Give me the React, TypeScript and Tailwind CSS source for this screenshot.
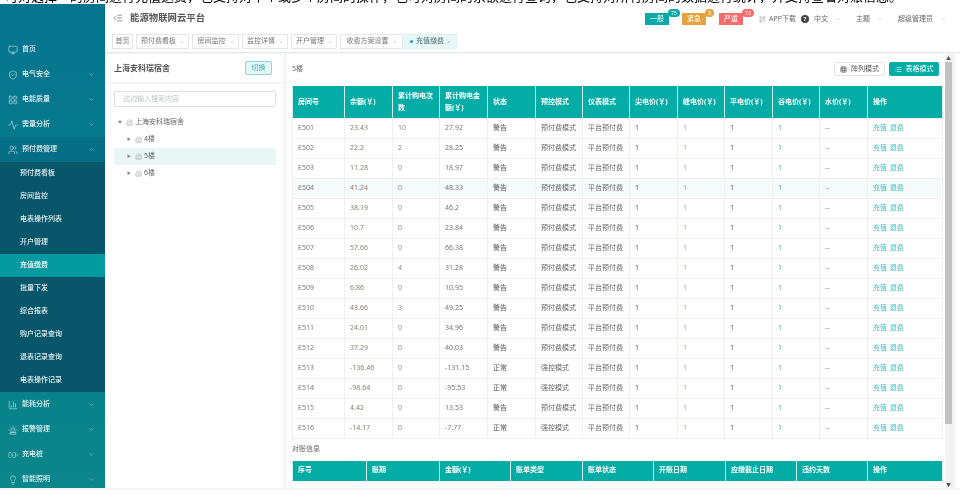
import {
  Activity,
  BarChart3,
  BatteryCharging,
  Building2,
  ChevronDown,
  ChevronUp,
  Grid3x3,
  IndentDecrease,
  LayoutGrid,
  Lightbulb,
  List,
  Monitor,
  QrCode,
  ShieldCheck,
  Siren,
  Users,
  X,
} from "lucide-react";

const topMenu = [
  { icon: Monitor, label: "首页", arrow: false },
  { icon: ShieldCheck, label: "电气安全", arrow: true },
  { icon: LayoutGrid, label: "电能质量", arrow: true },
  { icon: Activity, label: "需量分析", arrow: true },
];

const subMenu = ["预付费看板", "房间监控", "电表操作列表", "开户管理", "充值缴费", "批量下发", "综合报表", "购户记录查询", "退表记录查询", "电表操作记录"];

const bottomMenu = [
  { icon: BarChart3, label: "能耗分析" },
  { icon: Siren, label: "报警管理" },
  { icon: BatteryCharging, label: "充电桩" },
  { icon: Lightbulb, label: "智能照明" },
];

const tabs = [
  { label: "首页", w: "w-[21px]", close: false },
  { label: "预付费看板", w: "w-[53px]", close: true },
  { label: "房间监控", w: "w-[47px]", close: true },
  { label: "监控详情", w: "w-[46px]", close: true },
  { label: "开户管理", w: "w-[46px]", close: true },
  { label: "收费方案设置", w: "w-[63px]", close: true },
];

const roomHeads = ["房间号", "余额(￥)", "累计购电次数", "累计购电金额(￥)", "状态", "预控模式", "仪表模式", "尖电价(￥)", "峰电价(￥)", "平电价(￥)", "谷电价(￥)", "水价(￥)", "操作"];
const roomWidths = [52, 48, 47, 48, 48, 47, 47, 48, 47, 48, 47, 48, 75];

const rooms = [
  ["E501", "23.43", "10", "27.92", "warn"],
  ["E502", "22.2", "2", "28.25", "warn"],
  ["E503", "11.28", "0", "18.97", "warn"],
  ["E504", "41.24", "0", "48.33", "warn"],
  ["E505", "38.19", "0", "46.2", "warn"],
  ["E506", "10.7", "0", "23.84", "warn"],
  ["E507", "57.66", "0", "66.38", "warn"],
  ["E508", "26.02", "4", "31.28", "warn"],
  ["E509", "6.86", "0", "10.95", "warn"],
  ["E510", "43.66", "3", "49.25", "warn"],
  ["E511", "24.01", "0", "34.96", "warn"],
  ["E512", "37.29", "0", "40.03", "warn"],
  ["E513", "-136.46", "0", "-131.15", "ok"],
  ["E514", "-98.64", "0", "-95.53", "ok"],
  ["E515", "4.42", "0", "13.53", "warn"],
  ["E516", "-14.17", "0", "-7.77", "ok"],
];

const billHeads = ["序号", "账期", "金额(￥)", "账单类型", "账单状态", "开账日期", "应缴截止日期", "违约天数", "操作"];
const billWidths = [74, 73, 71, 72, 71, 72, 71, 71, 75];

const Sidebar = () => (
  <aside className="w-[105px] shrink-0 overflow-hidden bg-gradient-to-b from-[#04748f] to-[#0b868a] pt-[33px] text-[7px] font-medium text-[#e4f1f4]">
    {topMenu.map((m) => (
      <div key={m.label} className="flex h-[25px] items-center pl-[8px] pr-[10px]">
        <m.icon size={10} strokeWidth={1.5} className="text-[#c6e0e6]" />
        <span className="ml-[4px] flex-1">{m.label}</span>
        {m.arrow && <ChevronDown size={7} className="text-[#8fc3cf]" />}
      </div>
    ))}
    <div className="flex h-[25px] items-center bg-[#066f87] pl-[8px] pr-[10px]">
      <Users size={10} strokeWidth={1.5} className="text-[#c6e0e6]" />
      <span className="ml-[4px] flex-1">预付费管理</span>
      <ChevronUp size={7} className="text-[#8fc3cf]" />
    </div>
    <div className="bg-[#07566a]">
      {subMenu.map((s) => (
        <div key={s} className={s === "充值缴费" ? "flex h-[23px] items-center bg-[#059a9f] pl-[20px] text-white" : "flex h-[23px] items-center pl-[20px]"}>
          {s}
        </div>
      ))}
    </div>
    {bottomMenu.map((m) => (
      <div key={m.label} className="flex h-[25px] items-center pl-[8px] pr-[10px]">
        <m.icon size={10} strokeWidth={1.5} className="text-[#c6e0e6]" />
        <span className="ml-[4px] flex-1">{m.label}</span>
        <ChevronDown size={7} className="text-[#8fc3cf]" />
      </div>
    ))}
  </aside>
);

const Alarm = ({ label, count, bg, pill }: { label: string; count: string; bg: string; pill: string }) => (
  <div className={`relative flex h-[12px] w-[24px] items-center justify-center text-[7px] text-white ${bg}`}>
    {label}
    <span className={`absolute -top-[4px] left-[23px] flex h-[8px] min-w-[9px] items-center justify-center rounded-full px-[3px] text-[5px] leading-none ${pill}`}>{count}</span>
  </div>
);

const Header = () => (
  <header className="flex h-[28px] shrink-0 items-center pl-[8px] pr-[14px] text-[7px] text-[#666]">
    <IndentDecrease size={10} strokeWidth={1.5} className="text-[#555]" />
    <h1 className="ml-[7px] text-[9.4px] font-bold text-[#555]">能源物联网云平台</h1>
    <div className="ml-auto mt-[2px] flex items-center">
      <Alarm label="一般" count="75" bg="bg-[#0aa8a8]" pill="bg-[#0aa8a8]" />
      <div className="w-[13px]" />
      <Alarm label="紧急" count="3" bg="bg-[#e6a23c]" pill="bg-[#e6a23c]" />
      <div className="w-[13px]" />
      <Alarm label="严重" count="73" bg="bg-[#f56c6c]" pill="bg-[#f56c6c]" />
      <QrCode size={7} strokeWidth={1.5} className="ml-[16px] text-[#999]" />
      <span className="ml-[3px]">APP下载</span>
      <span className="ml-[5px] flex h-[8px] w-[8px] items-center justify-center rounded-full bg-[#444] text-[6px] font-bold text-white">?</span>
      <span className="ml-[5px]">中文</span>
      <ChevronDown size={6} className="ml-[7px] text-[#bbb]" />
      <span className="ml-[15px]">主题</span>
      <ChevronDown size={6} className="ml-[7px] text-[#bbb]" />
      <span className="ml-[15px]">超级管理员</span>
      <ChevronDown size={6} className="ml-[7px] text-[#bbb]" />
    </div>
  </header>
);

const Tabs = () => (
  <div className="flex h-[21px] shrink-0 gap-[3px] border-b border-[#e6e9ef] pl-[7px] pt-[2px] text-[7px] text-[#777] shadow-[0_1px_2px_rgba(0,0,0,0.04)]">
    {tabs.map((t) => (
      <div key={t.label} className={`flex h-[15px] shrink-0 items-center justify-center gap-[4px] border border-[#e3e5ea] ${t.w}`}>
        {t.label}
        {t.close && <X size={4} className="text-[#aaa]" />}
      </div>
    ))}
    <div className="-ml-[2px] flex h-[15px] w-[53px] shrink-0 items-center justify-center gap-[3px] border border-[#daf2f2] bg-[#e8f7f7] text-[#4c6b6b]">
      <span className="h-[3px] w-[3px] rounded-full bg-[#0aa8a8]" />
      充值缴费
      <X size={4} className="text-[#888]" />
    </div>
  </div>
);

const TreeRow = ({ label, active }: { label: string; active?: boolean }) => (
  <div className={active ? "flex h-[17px] items-center bg-[#e8f6f6] pl-[13px]" : "flex h-[17px] items-center pl-[13px]"}>
    <span className="text-[4px] text-[#888]">▶</span>
    <Building2 size={7} strokeWidth={1.6} className="ml-[4px] text-[#aaa]" />
    <span className="ml-[2px]">{label}</span>
  </div>
);

const TreePanel = () => (
  <section className="w-[178px] shrink-0 bg-white">
    <div className="flex h-[30px] items-center justify-between border-b-2 border-[#f4f5f7] pl-[9px] pr-[11px]">
      <h2 className="text-[8px] font-bold text-[#555]">上海安科瑞宿舍</h2>
      <button className="flex h-[14px] w-[27px] items-center justify-center rounded-[2px] border border-[#8ad7d7] bg-[#e6f7f7] text-[7px] text-[#2fb0b0]">切换</button>
    </div>
    <div className="px-[7px] pl-[9px] pt-[7px] text-[7px] text-[#666]">
      <div className="flex h-[16px] items-center rounded-[2px] border border-[#dcdfe6] pl-[8px] text-[#c0c4cc]">这边输入搜索内容</div>
      <div className="mt-[7px]">
        <div className="flex h-[17px] items-center pl-[4px]">
          <span className="text-[4px] text-[#888]">▼</span>
          <Building2 size={7} strokeWidth={1.6} className="ml-[4px] text-[#aaa]" />
          <span className="ml-[2px]">上海安科瑞宿舍</span>
        </div>
        <TreeRow label="4楼" />
        <TreeRow label="5楼" active />
        <TreeRow label="6楼" />
      </div>
    </div>
  </section>
);

const RoomTable = () => (
  <table className="w-[650px] table-fixed border-collapse text-[7px] leading-[12px] text-[#666]">
    <colgroup>
      {roomWidths.map((w, i) => (
        <col key={i} style={{ width: w }} />
      ))}
    </colgroup>
    <thead>
      <tr className="h-[32px] bg-[#03ada6] text-left text-white">
        {roomHeads.map((h) => (
          <th key={h} className="border-x border-[#cfeeed] px-[5px] font-bold">
            {h}
          </th>
        ))}
      </tr>
    </thead>
    <tbody>
      {rooms.map((r) => (
        <tr key={r[0]} className={r[0] === "E504" ? "h-[20px] bg-[#f5fafa]" : "h-[20px]"}>
          <td className="border border-[#f0f0f0] px-[5px] text-[#7a7480]">{r[0]}</td>
          <td className="border border-[#f0f0f0] px-[5px] text-[#8a7d6c]">{r[1]}</td>
          <td className="border border-[#f0f0f0] px-[5px] text-[#888]">{r[2]}</td>
          <td className="border border-[#f0f0f0] px-[5px] text-[#77727f]">{r[3]}</td>
          <td className="border border-[#f0f0f0] px-[5px] text-[#555]">{r[4] === "warn" ? "警告" : "正常"}</td>
          <td className="border border-[#f0f0f0] px-[5px]">{r[4] === "warn" ? "预付费模式" : "强控模式"}</td>
          <td className="border border-[#f0f0f0] px-[5px]">平台预付费</td>
          <td className="border border-[#f0f0f0] px-[5px] text-[#555]">1</td>
          <td className="border border-[#f0f0f0] px-[5px] text-[#c89a6a]">1</td>
          <td className="border border-[#f0f0f0] px-[5px] text-[#555]">1</td>
          <td className="border border-[#f0f0f0] px-[5px] text-[#4f9c9c]">1</td>
          <td className="border border-[#f0f0f0] px-[5px] text-[#888]">--</td>
          <td className="border border-[#f0f0f0] px-[5px] text-[#45bcbc]">
            充值 <span className="ml-[1px]">退费</span>
          </td>
        </tr>
      ))}
    </tbody>
  </table>
);

const BillTable = () => (
  <table className="w-[650px] table-fixed border-collapse text-[7px]">
    <colgroup>
      {billWidths.map((w, i) => (
        <col key={i} style={{ width: w }} />
      ))}
    </colgroup>
    <thead>
      <tr className="h-[20px] bg-[#03ada6] text-left text-white">
        {billHeads.map((h) => (
          <th key={h} className="border-x border-[#cfeeed] px-[5px] font-bold">
            {h}
          </th>
        ))}
      </tr>
    </thead>
    <tbody>
      <tr className="h-[20px]">
        <td colSpan={9} className="border-x border-[#f0f0f0]" />
      </tr>
    </tbody>
  </table>
);

const RoomPanel = () => (
  <section className="flex min-w-0 flex-1 overflow-hidden bg-white">
    <div className="w-[658px] shrink-0 pl-[5px] text-[7px] text-[#666]">
      <div className="flex h-[32px] items-center justify-between pb-[2px] pr-[6px]">
        <span>5楼</span>
        <div className="flex gap-[4px]">
          <button className="flex h-[14px] w-[51px] items-center justify-center gap-[4px] rounded-[2px] border border-[#e3e5ea] text-[#555]">
            <Grid3x3 size={7} strokeWidth={2} />
            阵列模式
          </button>
          <button className="flex h-[14px] w-[50px] items-center justify-center gap-[4px] rounded-[2px] bg-[#03ada6] text-white">
            <List size={7} strokeWidth={2} />
            表格模式
          </button>
        </div>
      </div>
      <RoomTable />
      <div className="flex h-[22px] items-center">对账信息</div>
      <BillTable />
    </div>
    <div className="flex w-[10px] shrink-0 flex-col bg-[#f3f3f3]">
      <span className="h-[8px] w-[7px] text-center text-[5px] leading-[8px] text-[#555]">▲</span>
      <div className="h-[362px] w-[7px] bg-[#c1c1c1]" />
      <span className="mt-auto h-[8px] w-[7px] text-center text-[5px] leading-[8px] text-[#555]">▼</span>
    </div>
  </section>
);

export default function App() {
  return (
    <div className="h-[498px] w-[960px] overflow-hidden bg-white blur-[0.45px] [font-family:'Noto_Sans','Noto_Sans_CJK_SC',sans-serif]">
      <div className="h-[4px] overflow-hidden whitespace-nowrap pl-[5px] text-[13px] leading-[14px] text-black">
        <p className="-mt-[11px]">可对选择一的房间进行充值退费，也支持对单个或多个房间的操作，也可对房间的余额进行查询，也支持对所有房间的数据进行统计，并支持查看对账信息。</p>
      </div>
      <div className="flex h-[484px]">
        <Sidebar />
        <main className="flex min-w-0 flex-1 flex-col">
          <Header />
          <Tabs />
          <div className="flex min-h-0 flex-1 gap-[4px] bg-[#f4f5f7] pt-[1px]">
            <TreePanel />
            <RoomPanel />
          </div>
        </main>
      </div>
      <div className="h-[10px] border-t-2 border-[#f3f3f3] bg-white" />
    </div>
  );
}
